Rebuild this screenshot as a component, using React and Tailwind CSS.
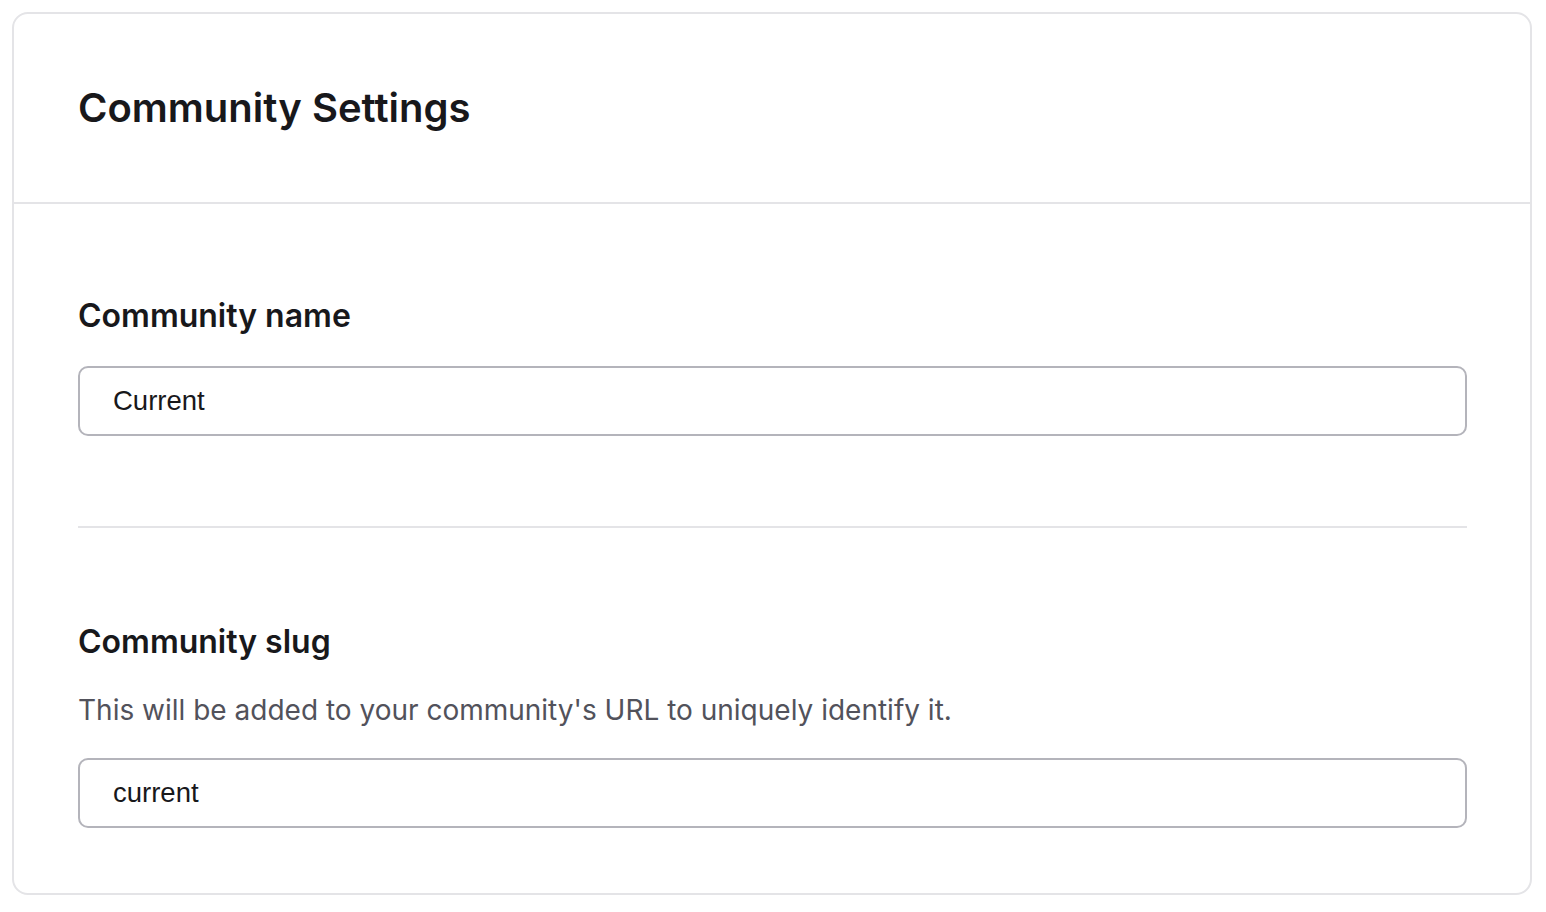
import React, { useState } from 'react';

const Field = ({ label, hint, value, onChange }) => (
  <div>
    <label className="block text-[32px] leading-[40px] font-semibold text-[#18181b]">{label}</label>
    {hint && (
      <p className="mt-[30px] text-[28px] leading-[36px] text-[#52525b]">{hint}</p>
    )}
    <input
      type="text"
      value={value}
      onChange={(e) => onChange(e.target.value)}
      className="mt-[30px] block w-full h-[70px] px-[33px] rounded-[10px] border-2 border-[#b4b4bb] bg-white text-[27.5px] text-[#18181b] focus:outline-none"
      style={{ fontFamily: '"Liberation Sans", Arial, sans-serif' }}
    />
  </div>
);

const App = () => {
  const [name, setName] = useState('Current');
  const [slug, setSlug] = useState('current');

  return (
    <div className="min-h-screen bg-white pl-[12px] pr-[14px] pt-[12px]" style={{ fontFamily: 'Inter, "Noto Sans", sans-serif' }}>
      <div className="border-2 border-[#e4e4e7] rounded-[16px] bg-white">
        {/* Header */}
        <div className="px-[64px] py-[72px] border-b-2 border-[#e4e4e7]">
          <h1 className="text-[40px] leading-[44px] font-semibold text-[#18181b]">Community Settings</h1>
        </div>

        {/* Body */}
        <div className="pl-[64px] pr-[63px] pt-[92px] pb-[65px]">
          <Field label="Community name" value={name} onChange={setName} />
          <div className="mt-[90px] mb-[94px] h-[2px] bg-[#e4e4e7]" />
          <Field
            label="Community slug"
            hint="This will be added to your community's URL to uniquely identify it."
            value={slug}
            onChange={setSlug}
          />
        </div>
      </div>
    </div>
  );
};

export default App;
